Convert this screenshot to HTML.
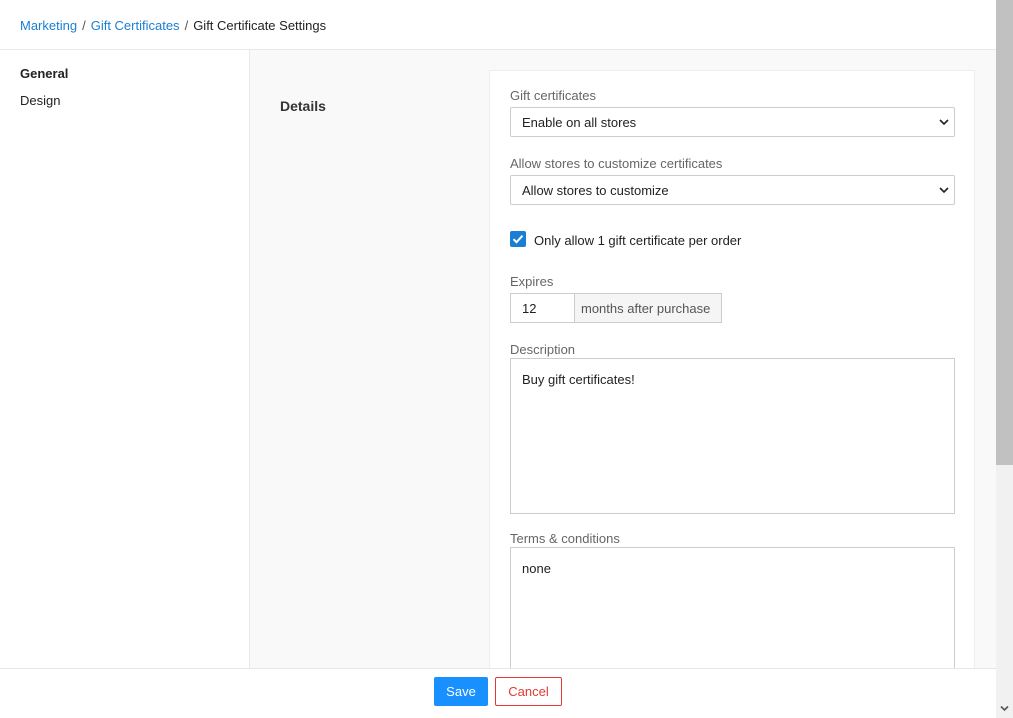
<!DOCTYPE html>
<html><head><style>
*{box-sizing:border-box;margin:0;padding:0}
body{width:1013px;height:718px;overflow:hidden;font-family:"Liberation Sans",Arial,sans-serif;font-size:13px;color:#222;background:#fff;position:relative}
.top{position:absolute;left:0;top:0;width:996px;height:50px;border-bottom:1px solid #e8e8e8;padding:18px 20px;font-size:13px}
.top a{color:#1a7fd4;text-decoration:none}
.top span{color:#555;margin:0 5px}
.side{position:absolute;left:0;top:50px;width:250px;height:618px;border-right:1px solid #e8e8e8;background:#fff}
.side div{position:absolute;left:20px}
.main{position:absolute;left:250px;top:50px;width:746px;height:618px;background:#f9f9f9}
.card{position:absolute;left:239px;top:20px;width:486px;height:620px;background:#fff;border:1px solid #eee}
.lbl{position:absolute;left:20px;color:#666;font-size:13px}
.sel{position:absolute;left:20px;width:445px;height:30px;border:1px solid #ccc;border-radius:2px;padding:7px 11px;font-size:13px;background:#fff}
.sel svg{position:absolute;right:5px;top:10px}
.ta{position:absolute;left:20px;width:445px;border:1px solid #ccc;padding:13px 11px;font-size:13px;background:#fff}
.sb{position:absolute;left:996px;top:0;width:17px;height:718px;background:#f1f1f1}
.thumb{position:absolute;left:0;top:0;width:17px;height:465px;background:#c1c1c1}
.foot{position:absolute;left:0;top:668px;width:996px;height:50px;background:#fff;border-top:1px solid #e6e6e6}
.btn{position:absolute;top:8px;height:29px;font-size:13px;text-align:center;line-height:29px;border-radius:2px}
</style></head><body>
<div class="top"><a>Marketing</a><span>/</span><a>Gift Certificates</a><span>/</span>Gift Certificate Settings</div>
<div class="side"><div style="top:16px;font-weight:bold">General</div><div style="top:43px">Design</div></div>
<div class="main">
<div style="position:absolute;left:30px;top:48px;font-weight:bold;font-size:14px;color:#333">Details</div>
<div class="card">
<div class="lbl" style="top:17px">Gift certificates</div>
<div class="sel" style="top:36px">Enable on all stores<svg width="10" height="8" viewBox="0 0 10 8"><path d="M1 2l4 4 4-4" stroke="#222" stroke-width="1.6" fill="none"/></svg></div>
<div class="lbl" style="top:85px">Allow stores to customize certificates</div>
<div class="sel" style="top:104px">Allow stores to customize<svg width="10" height="8" viewBox="0 0 10 8"><path d="M1 2l4 4 4-4" stroke="#222" stroke-width="1.6" fill="none"/></svg></div>
<div style="position:absolute;left:20px;top:160px;width:16px;height:16px;background:#1a7fd4;border-radius:2px"><svg width="16" height="16" viewBox="0 0 16 16"><path d="M3.5 8.2l3 3 6-6.5" stroke="#fff" stroke-width="2" fill="none"/></svg></div>
<div style="position:absolute;left:44px;top:162px">Only allow 1 gift certificate per order</div>
<div class="lbl" style="top:203px">Expires</div>
<div style="position:absolute;left:20px;top:222px;width:65px;height:30px;border:1px solid #ccc;padding:7px 11px">12</div>
<div style="position:absolute;left:84px;top:222px;width:148px;height:30px;border:1px solid #ccc;background:#f5f5f5;color:#555;padding:7px 6px">months after purchase</div>
<div class="lbl" style="top:271px">Description</div>
<div class="ta" style="top:287px;height:156px">Buy gift certificates!</div>
<div class="lbl" style="top:460px">Terms &amp; conditions</div>
<div class="ta" style="top:476px;height:160px">none</div>
</div></div>
<div class="foot">
<div class="btn" style="left:434px;width:54px;background:#1890ff;color:#fff">Save</div>
<div class="btn" style="left:495px;width:67px;border:1px solid #e53935;color:#e53935;line-height:27px">Cancel</div>
</div>
<div class="sb"><div class="thumb"></div><svg style="position:absolute;left:4px;top:705px" width="9" height="7" viewBox="0 0 9 7"><path d="M1 1.5l3.5 3.5 3.5-3.5" stroke="#555" stroke-width="1.6" fill="none"/></svg></div>
</body></html>
